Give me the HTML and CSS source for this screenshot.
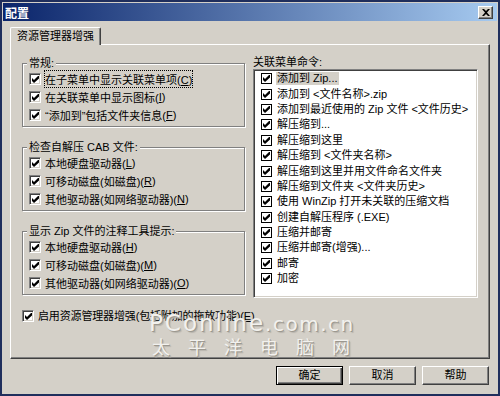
FILE: index.html
```html
<html>

<head>
  <meta http-equiv="Content-Type" content="text/html; charset=utf-8" />
  <title>配置</title>
  <link rel="stylesheet" href="styles.css">
</head>

<body>
  <div class="window">
    <div class="titlebar">
      <span class="title">配置</span>
      <span class="close">
        <svg width="8" height="7" viewBox="0 0 8 7"><path d="M0 0h2l2 2 2-2h2L5 3.5 8 7H6L4 5 2 7H0l3-3.5z" fill="#000"/></svg>
      </span>
    </div>
    <div class="content">
      <div class="tabs"><div class="tab">资源管理器增强</div></div>
      <div class="panel">
        <div class="left">
          <fieldset class="group">
            <legend>常规:</legend>
            <div class="check"><span class="box"></span><span class="focus">在子菜单中显示关联菜单项(<u>C</u>)</span></div>
            <div class="check"><span class="box"></span>在关联菜单中显示图标(<u>I</u>)</div>
            <div class="check"><span class="box"></span>“添加到”包括文件夹信息(<u>F</u>)</div>
          </fieldset>
          <fieldset class="group">
            <legend>检查自解压 CAB 文件:</legend>
            <div class="check"><span class="box"></span>本地硬盘驱动器(<u>L</u>)</div>
            <div class="check"><span class="box"></span>可移动磁盘(如磁盘)(<u>R</u>)</div>
            <div class="check"><span class="box"></span>其他驱动器(如网络驱动器)(<u>N</u>)</div>
          </fieldset>
          <fieldset class="group">
            <legend>显示 Zip 文件的注释工具提示:</legend>
            <div class="check"><span class="box"></span>本地硬盘驱动器(<u>H</u>)</div>
            <div class="check"><span class="box"></span>可移动磁盘(如磁盘)(<u>M</u>)</div>
            <div class="check"><span class="box"></span>其他驱动器(如网络驱动器)(<u>O</u>)</div>
          </fieldset>
          <div class="check check-main"><span class="box"></span><span class="main-text">启用资源管理器增强(包括附加的拖放功能)(<u>E</u>)</span></div>
        </div>
        <div class="right">
          <div class="list-title">关联菜单命令:</div>
          <ul class="list">
            <li class="item"><span class="lbox"></span><span class="text sel">添加到 Zip...</span></li>
            <li class="item"><span class="lbox"></span><span class="text">添加到 &lt;文件名称&gt;.zip</span></li>
            <li class="item"><span class="lbox"></span><span class="text">添加到最近使用的 Zip 文件 &lt;文件历史&gt;</span></li>
            <li class="item"><span class="lbox"></span><span class="text">解压缩到...</span></li>
            <li class="item"><span class="lbox"></span><span class="text">解压缩到这里</span></li>
            <li class="item"><span class="lbox"></span><span class="text">解压缩到 &lt;文件夹名称&gt;</span></li>
            <li class="item"><span class="lbox"></span><span class="text">解压缩到这里并用文件命名文件夹</span></li>
            <li class="item"><span class="lbox"></span><span class="text">解压缩到文件夹 &lt;文件夹历史&gt;</span></li>
            <li class="item"><span class="lbox"></span><span class="text">使用 WinZip 打开未关联的压缩文档</span></li>
            <li class="item"><span class="lbox"></span><span class="text">创建自解压程序 (.EXE)</span></li>
            <li class="item"><span class="lbox"></span><span class="text">压缩并邮寄</span></li>
            <li class="item"><span class="lbox"></span><span class="text">压缩并邮寄(增强)...</span></li>
            <li class="item"><span class="lbox"></span><span class="text">邮寄</span></li>
            <li class="item"><span class="lbox"></span><span class="text">加密</span></li>
          </ul>
        </div>
      </div>
      <div class="buttons">
        <div class="btn btn-default">确定</div>
        <div class="btn">取消</div>
        <div class="btn">帮助</div>
      </div>
    </div>
    <div class="watermark">
      <div class="wm-en">PConline<span class="wm-small">.com.cn</span></div>
      <div class="wm-cn">太平洋电脑网</div>
    </div>
  </div>
</body>

</html>
```

FILE: styles.css
```css
body,
html {
  margin: 0;
  padding: 0;
}

body {
  background: #d4d0c8;
  font-family: "Liberation Sans", "Noto Sans CJK SC", sans-serif;
  font-size: 11px;
  color: #000;
}

.window {
  position: relative;
  width: 500px;
  height: 396px;
  box-sizing: border-box;
  border: 2px solid #1f2e5c;
  padding: 1px;
  background: #d4d0c8;
  display: flex;
  flex-direction: column;
  overflow: hidden;
}

.titlebar {
  height: 18px;
  flex: none;
  display: flex;
  align-items: center;
  padding: 0 4px 0 2px;
  background: linear-gradient(to right, #0a246a, #a6caf0);
}

.title {
  color: #fff;
  font-weight: bold;
  font-size: 12px;
}

.close {
  margin-left: auto;
  width: 15px;
  height: 13px;
  box-sizing: border-box;
  background: #d4d0c8;
  border: 1px solid;
  border-color: #fff #404040 #404040 #fff;
  box-shadow: inset -1px -1px #808080;
  display: flex;
  align-items: center;
  justify-content: center;
}

.content {
  flex: 1;
  padding: 6px 7px 0 7px;
  display: flex;
  flex-direction: column;
}

.tabs {
  height: 17px;
  display: flex;
}

.tab {
  position: relative;
  z-index: 1;
  height: 18px;
  box-sizing: border-box;
  padding: 0 6px;
  line-height: 17px;
  background: #d4d0c8;
  border: 1px solid;
  border-bottom: none;
  border-color: #fff #404040 #404040 #fff;
  border-radius: 2px 2px 0 0;
  box-shadow: inset -1px 0 #808080;
}

.panel {
  height: 315px;
  box-sizing: border-box;
  border: 1px solid;
  border-color: #fff #404040 #404040 #fff;
  box-shadow: inset -1px -1px #808080;
  padding: 11px 11px 0 11px;
  display: flex;
  gap: 8px;
}

.left {
  width: 223px;
}

.group {
  margin: 0 0 12px 0;
  padding: 0 4px 2px 4px;
  border: 1px solid #808080;
  box-shadow: inset 1px 1px #fff, 1px 1px #fff;
  min-inline-size: 0;
}

.group + .group {
  margin-top: 13px;
}

.group legend {
  padding: 0 2px;
  line-height: 14px;
  background: #d4d0c8;
}

.check {
  height: 18px;
  display: flex;
  align-items: center;
  white-space: nowrap;
}

.box {
  width: 12px;
  height: 12px;
  box-sizing: border-box;
  margin: 0 4px 0 2px;
  flex: none;
  border: 1px solid;
  border-color: #808080 #fff #fff #808080;
  box-shadow: inset 1px 1px #404040, inset -1px -1px #d4d0c8;
  background: #fff url("data:image/svg+xml;utf8,<svg xmlns='http://www.w3.org/2000/svg' width='7' height='7' viewBox='0 0 7 7'><path d='M0 2l2 2 4-4h1v2.5L2 7 0 5z' fill='black'/></svg>") no-repeat center;
}

.focus {
  outline: 1px dotted #000;
  outline-offset: 0;
}

.check-main {
  margin-top: 5px;
}

.check-main .box {
  margin-left: 0;
}

.main-text {
  line-height: 13px;
  letter-spacing: -0.15px;
}

.right {
  width: 225px;
  display: flex;
  flex-direction: column;
}

.list-title {
  line-height: 13px;
}

.list {
  margin: 0;
  padding: 0 0 0 6px;
  list-style: none;
  height: 229px;
  box-sizing: border-box;
  background: #fff;
  border: 1px solid;
  border-color: #808080 #fff #fff #808080;
  box-shadow: inset 1px 1px #404040, inset -1px -1px #d4d0c8;
  padding-top: 1px;
}

.item {
  height: 15.4px;
  display: flex;
  align-items: center;
  white-space: nowrap;
}

.lbox {
  width: 11px;
  height: 11px;
  box-sizing: border-box;
  flex: none;
  margin: 0 4px 0 1px;
  border: 1.5px solid #000;
  background: #fff url("data:image/svg+xml;utf8,<svg xmlns='http://www.w3.org/2000/svg' width='7' height='7' viewBox='0 0 7 7'><path d='M0 2l2 2 4-4h1v2.5L2 7 0 5z' fill='black'/></svg>") no-repeat center;
}

.text {
  padding: 0 1px;
  line-height: 13px;
}

.sel {
  background: #d4d0c8;
}

.buttons {
  margin-top: 7px;
  display: flex;
  justify-content: flex-end;
  gap: 6px;
  padding-right: 1px;
}

.btn {
  width: 67px;
  height: 19px;
  box-sizing: border-box;
  text-align: center;
  line-height: 17px;
  border: 1px solid;
  border-color: #fff #404040 #404040 #fff;
  box-shadow: inset -1px -1px #808080;
}

.btn-default {
  border-color: #000;
  box-shadow: inset 1px 1px #fff, inset -1px -1px #404040, inset -2px -2px #808080;
}

.watermark {
  position: absolute;
  left: 147px;
  top: 312px;
  color: #f2f1ee;
  text-shadow: 1px 1px 0 #9c988f, 2px 2px 1px #b8b4ac;
  pointer-events: none;
}

.wm-en {
  font-family: "DejaVu Sans", sans-serif;
  font-size: 23px;
  line-height: 18px;
  letter-spacing: 2px;
  white-space: nowrap;
}

.wm-small {
  font-size: 20px;
  letter-spacing: 1.5px;
}

.wm-cn {
  margin-top: 3px;
  font-family: "Noto Sans CJK SC", sans-serif;
  font-size: 18px;
  line-height: 20px;
  letter-spacing: 18px;
  padding-left: 3px;
}
```
